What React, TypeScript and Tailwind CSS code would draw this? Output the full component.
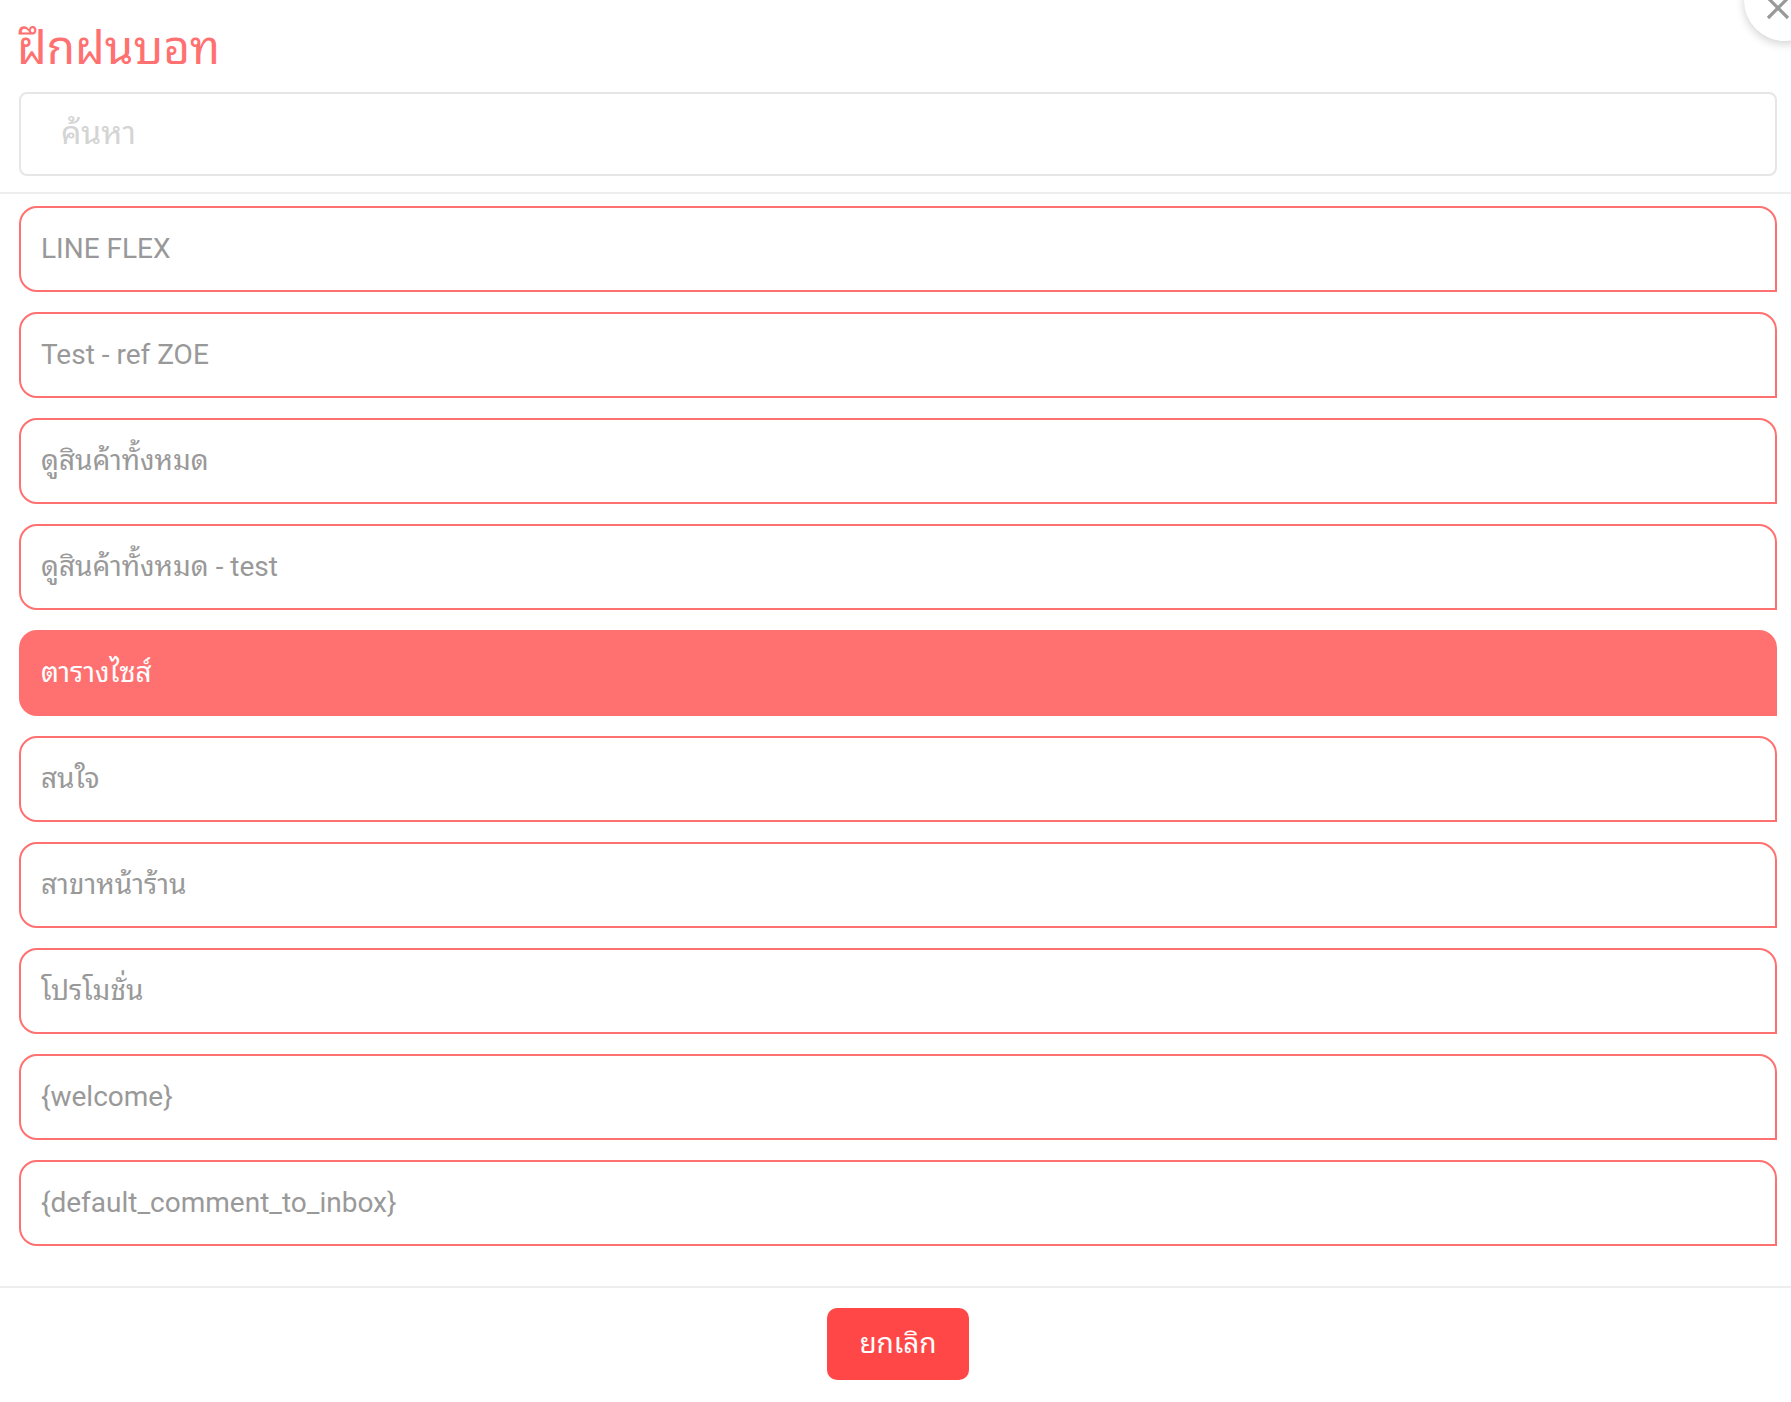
const items = ["LINE FLEX", "Test - ref ZOE", "ดูสินค้าทั้งหมด", "ดูสินค้าทั้งหมด - test", "ตารางไซส์", "สนใจ", "สาขาหน้าร้าน", "โปรโมชั่น", "{welcome}", "{default_comment_to_inbox}"];

export default function App() {
  return (
    <div className="relative h-[1402px] w-[1791px] overflow-hidden bg-white font-['Roboto','Noto_Sans_Thai_Looped',sans-serif]">
      <div className="absolute left-[1744px] top-[-41px] h-[82px] w-[82px] rounded-full bg-white shadow-[0_3px_10px_rgba(0,0,0,0.18)]">
        <svg width="24" height="24" viewBox="0 0 24 24" className="absolute left-[22px] top-[37px]" stroke="#999" strokeWidth="3.2" fill="none"><path d="M2 2 L22 22 M22 2 L2 22" /></svg>
      </div>
      <div className="flex flex-col">
        <div className="border-b-2 border-[#eeeeee] px-[19px] pb-[16px] pt-[20px]">
          <div className="ml-[-2px] h-[72px] text-[46px] leading-[56px] text-[#ff7171]">ฝึกฝนบอท</div>
          <div className="flex h-[84px] w-[1758px] items-center rounded-lg border-2 border-[#e6e6e6] px-[40px] pb-[2px] text-[32px] text-[#d4d4d4]">ค้นหา</div>
        </div>
        <div className="flex flex-col gap-[20px] px-[19px] pt-[12px]">
          {items.map((t, i) => (
            <div key={t} className={i === 4 ? "flex h-[86px] w-[1758px] items-center rounded-t-[18px] rounded-bl-[18px] bg-[#ff7171] px-[22px] text-[28px] text-white" : "flex h-[86px] w-[1758px] items-center rounded-t-[18px] rounded-bl-[18px] border-2 border-[#ff7171] px-[20px] text-[28px] text-[#999999]"}>{t}</div>
          ))}
        </div>
        <div className="mt-[40px] flex justify-center border-t-2 border-[#eeeeee] pl-[5px] pt-[20px]">
          <button className="h-[72px] w-[142px] rounded-[10px] bg-[#ff4747] text-[28px] text-white">ยกเลิก</button>
        </div>
      </div>
    </div>
  );
}
